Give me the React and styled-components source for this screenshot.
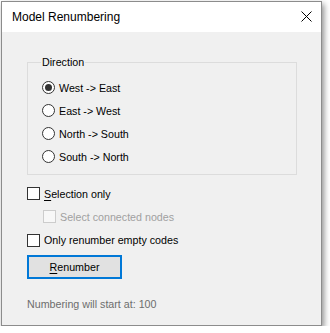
import React, { useState } from 'react';
import styled, { createGlobalStyle } from 'styled-components';

const GlobalStyle = createGlobalStyle`
  body {
    margin: 0;
    background: #ffffff;
    font-family: 'Liberation Sans', Arial, sans-serif;
    font-size: 10.7px;
    color: #000;
  }
`;

const Window = styled.div`
  width: 321px;
  height: 325px;
  margin: 1px 0 0 1px;
  border: 1px solid #8c8c8c;
  box-sizing: border-box;
  display: flex;
  flex-direction: column;
  background: #f0f0f0;
  box-shadow: 2px 3px 6px rgba(0, 0, 0, 0.45);
`;

const TitleBar = styled.div`
  height: 30px;
  flex: none;
  background: #ffffff;
  display: flex;
  align-items: center;
  justify-content: space-between;
  padding: 0 9px 0 10px;
`;

const Title = styled.span`
  font-size: 12px;
  color: #000;
`;

const CloseIcon = styled.svg`
  width: 11px;
  height: 11px;
  margin-top: -1px;
`;

const Body = styled.div`
  flex: 1;
  padding: 22px 24px 0 25px;
  display: flex;
  flex-direction: column;
`;

const GroupBox = styled.fieldset`
  margin: 0;
  padding: 6px 6px 6px 14px;
  border: 1px solid #dcdcdc;
  min-width: 0;
`;

const Legend = styled.legend`
  padding: 0 1px;
  margin-left: -1px;
  line-height: 16px;
`;

const OptionRow = styled.label`
  display: flex;
  align-items: center;
  height: ${(p) => p.$h || 23}px;
  padding-left: ${(p) => p.$indent || 0}px;
  color: ${(p) => (p.$disabled ? '#a0a0a0' : '#000')};
  gap: 4px;
`;

const RadioMark = styled.span`
  width: 13px;
  height: 13px;
  box-sizing: border-box;
  border: 1px solid #333;
  border-radius: 50%;
  background: #fff;
  display: flex;
  align-items: center;
  justify-content: center;
  flex: none;

  &::after {
    content: '';
    width: 7px;
    height: 7px;
    border-radius: 50%;
    background: ${(p) => (p.$checked ? '#333' : 'transparent')};
  }
`;

const CheckMark = styled.span`
  width: 13px;
  height: 13px;
  box-sizing: border-box;
  border: 1px solid ${(p) => (p.$disabled ? '#cccccc' : '#333')};
  background: ${(p) => (p.$disabled ? '#f7f7f7' : '#fff')};
  flex: none;
`;

const Underline = styled.span`
  text-decoration: underline;
  text-underline-offset: 2px;
`;

const Options = styled.div`
  display: flex;
  flex-direction: column;
  margin-top: 7px;
`;

const Button = styled.button`
  width: 95px;
  height: 24px;
  margin-top: 3px;
  background: #e1e1e1;
  border: 2px solid #0078d7;
  box-sizing: border-box;
  font-family: inherit;
  font-size: 10.7px;
  color: #000;
  padding: 0;
`;

const Footer = styled.div`
  margin-top: 19px;
  color: #6d6d6d;
`;

const directions = ['West -> East', 'East -> West', 'North -> South', 'South -> North'];

export default function App() {
  const [dir, setDir] = useState(0);

  return (
    <>
      <GlobalStyle />
      <Window>
        <TitleBar>
          <Title>Model Renumbering</Title>
          <CloseIcon viewBox="0 0 11 11">
            <path d="M0.5 0.5 L10.5 10.5 M10.5 0.5 L0.5 10.5" stroke="#000" strokeWidth="1" fill="none" />
          </CloseIcon>
        </TitleBar>
        <Body>
          <GroupBox>
            <Legend>Direction</Legend>
            {directions.map((d, i) => (
              <OptionRow key={d} onClick={() => setDir(i)}>
                <RadioMark $checked={dir === i} />
                {d}
              </OptionRow>
            ))}
          </GroupBox>
          <Options>
            <OptionRow>
              <CheckMark />
              <span>
                <Underline>S</Underline>election only
              </span>
            </OptionRow>
            <OptionRow $indent={16} $disabled>
              <CheckMark $disabled />
              Select connected nodes
            </OptionRow>
            <OptionRow $h={24}>
              <CheckMark />
              Only renumber empty codes
            </OptionRow>
          </Options>
          <Button>
            <Underline>R</Underline>enumber
          </Button>
          <Footer>Numbering will start at: 100</Footer>
        </Body>
      </Window>
    </>
  );
}
